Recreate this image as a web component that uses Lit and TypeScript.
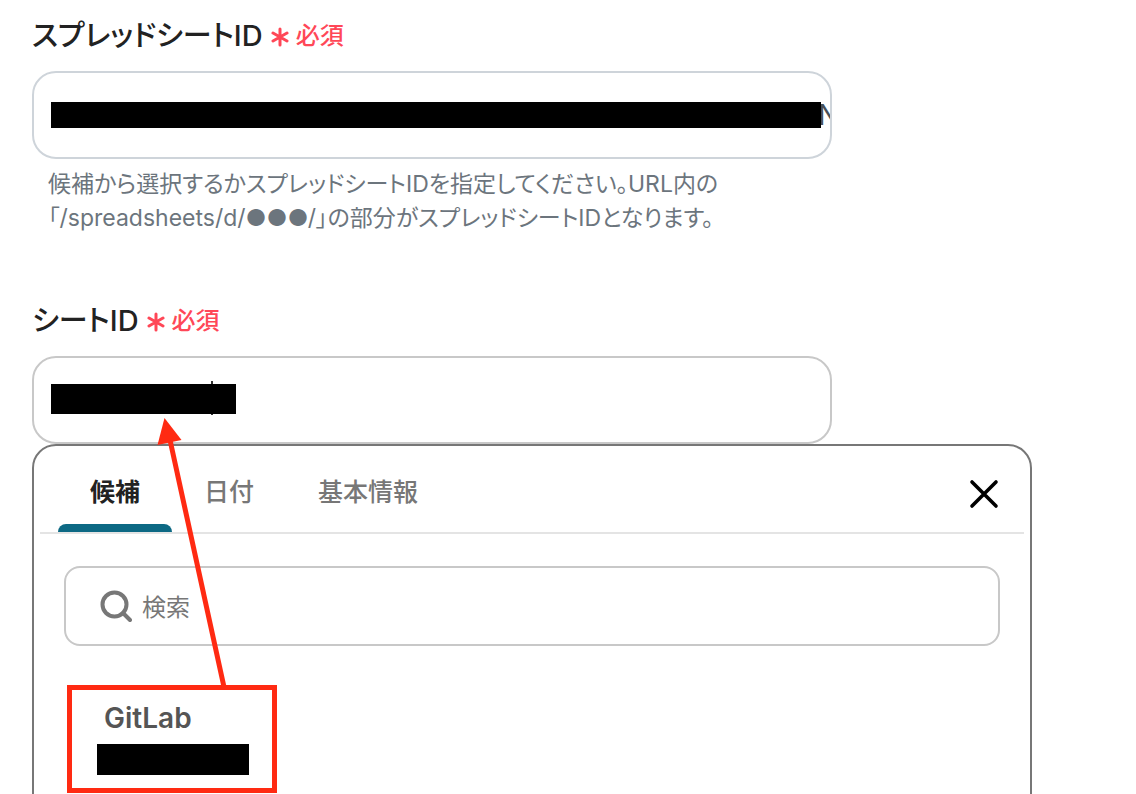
import { LitElement, html, css } from "lit";
import { customElement, state } from "lit/decorators.js";

@customElement("app-root")
export class AppRoot extends LitElement {
  static styles = css`
    :host {
      display: block;
      position: relative;
      box-sizing: border-box;
      height: 100vh;
      overflow: hidden;
      padding: 15px 104px 0 32px;
      background: #fff;
      color: #222;
      font-family: Inter, "Noto Sans CJK JP", sans-serif;
      font-feature-settings: "palt";
    }
    * { box-sizing: border-box; }
    button, input { font: inherit; font-feature-settings: inherit; color: inherit; margin: 0; }
    .group { max-width: 800px; }
    .group + .group { margin-top: 65px; }
    .caption {
      display: flex;
      align-items: center;
      gap: 8px;
      height: 40px;
      padding-bottom: 4px;
      margin-bottom: 16px;
      font-size: 29px;
      font-weight: 500;
    }
    .required {
      display: flex;
      align-items: center;
      gap: 7px;
      color: #ff4757;
      font-size: 24px;
      font-weight: 500;
    }
    .required svg { margin-top: 8px; }
    .field {
      display: flex;
      align-items: center;
      height: 88px;
      padding-left: 17px;
      overflow: hidden;
      isolation: isolate;
      border: 2px solid #ced4da;
      border-radius: 24px;
      font-size: 28px;
      color: #495057;
    }
    .field.active { border-color: #c8c8c8; }
    .field input {
      width: 9px;
      height: 100%;
      padding: 0;
      border: 0;
      outline: 0;
      background: none;
      text-indent: -3px;
    }
    .field.active input { flex: 1; }
    .mask { background: #000; }
    .mask-long { flex: 1; height: 26px; }
    .mask-short { position: relative; width: 185px; height: 30px; margin-bottom: 2px; }
    .mask-short::after {
      content: "";
      position: absolute;
      z-index: -1;
      left: 160px;
      top: -3px;
      width: 2px;
      height: 34px;
      background: #333;
    }
    .mask-option { display: block; width: 152px; height: 31px; }
    .hint {
      margin: 8px 0 0;
      padding: 0 16px;
      color: #6c757d;
      font-size: 23px;
      line-height: 34px;
    }
    .panel {
      max-width: 1000px;
      height: 400px;
      padding: 0 6px;
      border: 2px solid #777;
      border-radius: 24px;
      background: #fff;
    }
    .tabs {
      display: flex;
      height: 88px;
      padding: 0 18px;
      border-bottom: 2px solid #e4e4e4;
    }
    .tab {
      position: relative;
      padding: 2px 32px 0;
      border: 0;
      background: none;
      color: #777;
      font-size: 25px;
      font-weight: 500;
    }
    .tab.selected { color: #222; font-weight: 700; }
    .tab.selected::after {
      content: "";
      position: absolute;
      inset: auto 0 0 0;
      height: 8px;
      border-radius: 8px 8px 0 0;
      background: #0d6984;
    }
    .close {
      display: flex;
      align-items: center;
      margin-left: auto;
      padding: 10px 6px 0 0;
      border: 0;
      background: none;
    }
    .search {
      display: flex;
      align-items: center;
      gap: 10px;
      height: 80px;
      margin: 32px 24px 39px;
      padding: 2px 34px 0;
      border: 2px solid #c8c8c8;
      border-radius: 16px;
      color: #777;
    }
    .search input {
      flex: 1;
      min-width: 0;
      padding: 0;
      border: 0;
      outline: 0;
      background: none;
      font-size: 24px;
    }
    .search input::placeholder { color: #777; opacity: 1; }
    .option {
      display: block;
      width: 210px;
      height: 108px;
      margin-left: 27px;
      padding: 0 25px 2px;
      border: 5px solid #ff2a12;
      background: none;
      text-align: left;
    }
    .name {
      display: block;
      padding-left: 7px;
      margin-bottom: 9px;
      color: #555;
      font-size: 28px;
      font-weight: 600;
      line-height: 34px;
    }
    .arrow { position: absolute; left: 150px; top: 410px; pointer-events: none; }
  `;

  @state() private selected = "候補";

  private required() {
    return html`<span class="required">
      <svg width="18" height="20" viewBox="0 0 18 20" fill="none" stroke="currentColor" stroke-width="3" stroke-linecap="round" aria-hidden="true">
        <path d="M9 2v16M2 6l14 8M16 6L2 14" />
      </svg>必須</span>`;
  }

  render() {
    return html`
      <div class="group">
        <label class="caption" for="spreadsheet"><span>スプレッドシートID</span>${this.required()}</label>
        <div class="field">
          <span class="mask mask-long"></span>
          <input id="spreadsheet" value="N" />
        </div>
        <p class="hint">候補から選択するかスプレッドシートIDを指定してください。URL内の<br />「/spreadsheets/d/●●●/」の部分がスプレッドシートIDとなります。</p>
      </div>
      <div class="group">
        <label class="caption" for="sheet"><span>シートID</span>${this.required()}</label>
        <div class="field active">
          <span class="mask mask-short"></span>
          <input id="sheet" />
        </div>
      </div>
      <section class="panel">
        <div class="tabs" role="tablist">
          ${["候補", "日付", "基本情報"].map(
            (name) => html`<button
              role="tab"
              class="tab ${name === this.selected ? "selected" : ""}"
              aria-selected=${name === this.selected}
              @click=${() => (this.selected = name)}
            >${name}</button>`
          )}
          <button class="close" aria-label="閉じる">
            <svg width="32" height="32" viewBox="0 0 32 32" fill="none" stroke="#000" stroke-width="3.6" stroke-linecap="round">
              <path d="M4 4l24 24M28 4L4 28" />
            </svg>
          </button>
        </div>
        <label class="search">
          <svg width="32" height="34" viewBox="0 0 32 34" fill="none" stroke="currentColor" stroke-width="4" stroke-linecap="round" aria-hidden="true">
            <circle cx="14.500" cy="14.500" r="12" />
            <path d="M23 23l7 7" />
          </svg>
          <input type="text" placeholder="検索" aria-label="検索" />
        </label>
        <button class="option">
          <span class="name">GitLab</span>
          <span class="mask mask-option"></span>
        </button>
      </section>
      <svg class="arrow" width="90" height="278" viewBox="0 0 90 278" aria-hidden="true">
        <path d="M20 30L74 277" stroke="#ff2a12" stroke-width="5" />
        <path d="M14.500 8L31.500 30L7.500 35z" fill="#ff2a12" />
      </svg>
    `;
  }
}
